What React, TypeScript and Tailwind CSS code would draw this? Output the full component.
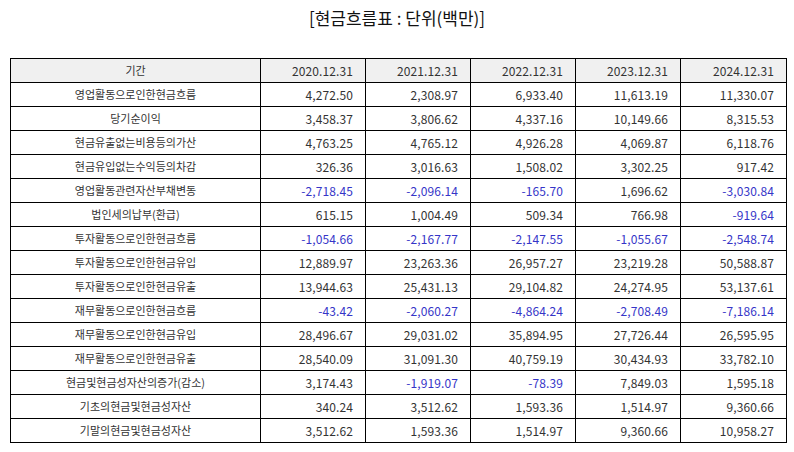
import React from "react";

type Row = { label: string; values: string[] };

const dates = ["2020.12.31", "2021.12.31", "2022.12.31", "2023.12.31", "2024.12.31"];

const rows: Row[] = [
  { label: "영업활동으로인한현금흐름", values: ["4,272.50", "2,308.97", "6,933.40", "11,613.19", "11,330.07"] },
  { label: "당기순이익", values: ["3,458.37", "3,806.62", "4,337.16", "10,149.66", "8,315.53"] },
  { label: "현금유출없는비용등의가산", values: ["4,763.25", "4,765.12", "4,926.28", "4,069.87", "6,118.76"] },
  { label: "현금유입없는수익등의차감", values: ["326.36", "3,016.63", "1,508.02", "3,302.25", "917.42"] },
  { label: "영업활동관련자산부채변동", values: ["-2,718.45", "-2,096.14", "-165.70", "1,696.62", "-3,030.84"] },
  { label: "법인세의납부(환급)", values: ["615.15", "1,004.49", "509.34", "766.98", "-919.64"] },
  { label: "투자활동으로인한현금흐름", values: ["-1,054.66", "-2,167.77", "-2,147.55", "-1,055.67", "-2,548.74"] },
  { label: "투자활동으로인한현금유입", values: ["12,889.97", "23,263.36", "26,957.27", "23,219.28", "50,588.87"] },
  { label: "투자활동으로인한현금유출", values: ["13,944.63", "25,431.13", "29,104.82", "24,274.95", "53,137.61"] },
  { label: "재무활동으로인한현금흐름", values: ["-43.42", "-2,060.27", "-4,864.24", "-2,708.49", "-7,186.14"] },
  { label: "재무활동으로인한현금유입", values: ["28,496.67", "29,031.02", "35,894.95", "27,726.44", "26,595.95"] },
  { label: "재무활동으로인한현금유출", values: ["28,540.09", "31,091.30", "40,759.19", "30,434.93", "33,782.10"] },
  { label: "현금및현금성자산의증가(감소)", values: ["3,174.43", "-1,919.07", "-78.39", "7,849.03", "1,595.18"] },
  { label: "기초의현금및현금성자산", values: ["340.24", "3,512.62", "1,593.36", "1,514.97", "9,360.66"] },
  { label: "기말의현금및현금성자산", values: ["3,512.62", "1,593.36", "1,514.97", "9,360.66", "10,958.27"] },
];

export default function App() {
  return (
    <div
      className="w-[794px] h-[452px] bg-white text-[#333]"
      style={{ fontFamily: '"Noto Sans CJK KR", "Noto Sans", sans-serif' }}
    >
      <div className="pt-[4px] h-[58px] text-center text-[17px] leading-[28px] text-[#111]">
        [현금흐름표 : 단위(백만)]
      </div>
      <table className="ml-[10px] w-[776px] table-fixed border-collapse text-[11px]">
        <colgroup>
          <col className="w-[250px]" />
          <col className="w-[105px]" />
          <col className="w-[105px]" />
          <col className="w-[105px]" />
          <col className="w-[105px]" />
          <col className="w-[106px]" />
        </colgroup>
        <thead>
          <tr className="h-[24px] bg-[#f0f0f0]">
            <th className="border border-[#000] font-normal text-center p-0">기간</th>
            {dates.map((d) => (
              <th key={d} className="border border-[#000] font-normal text-right text-[12px] tracking-[0.1px] pr-[12px] p-0">
                {d}
              </th>
            ))}
          </tr>
        </thead>
        <tbody>
          {rows.map((r) => (
            <tr key={r.label} className="h-[24px]">
              <td className="border border-[#000] text-center p-0">{r.label}</td>
              {r.values.map((v, i) => (
                <td
                  key={i}
                  className={
                    v.startsWith("-")
                      ? "border border-[#000] text-right text-[12px] tracking-[0.1px] pr-[12px] p-0 text-[#3535c8]"
                      : "border border-[#000] text-right text-[12px] tracking-[0.1px] pr-[12px] p-0"
                  }
                >
                  {v}
                </td>
              ))}
            </tr>
          ))}
        </tbody>
      </table>
    </div>
  );
}
